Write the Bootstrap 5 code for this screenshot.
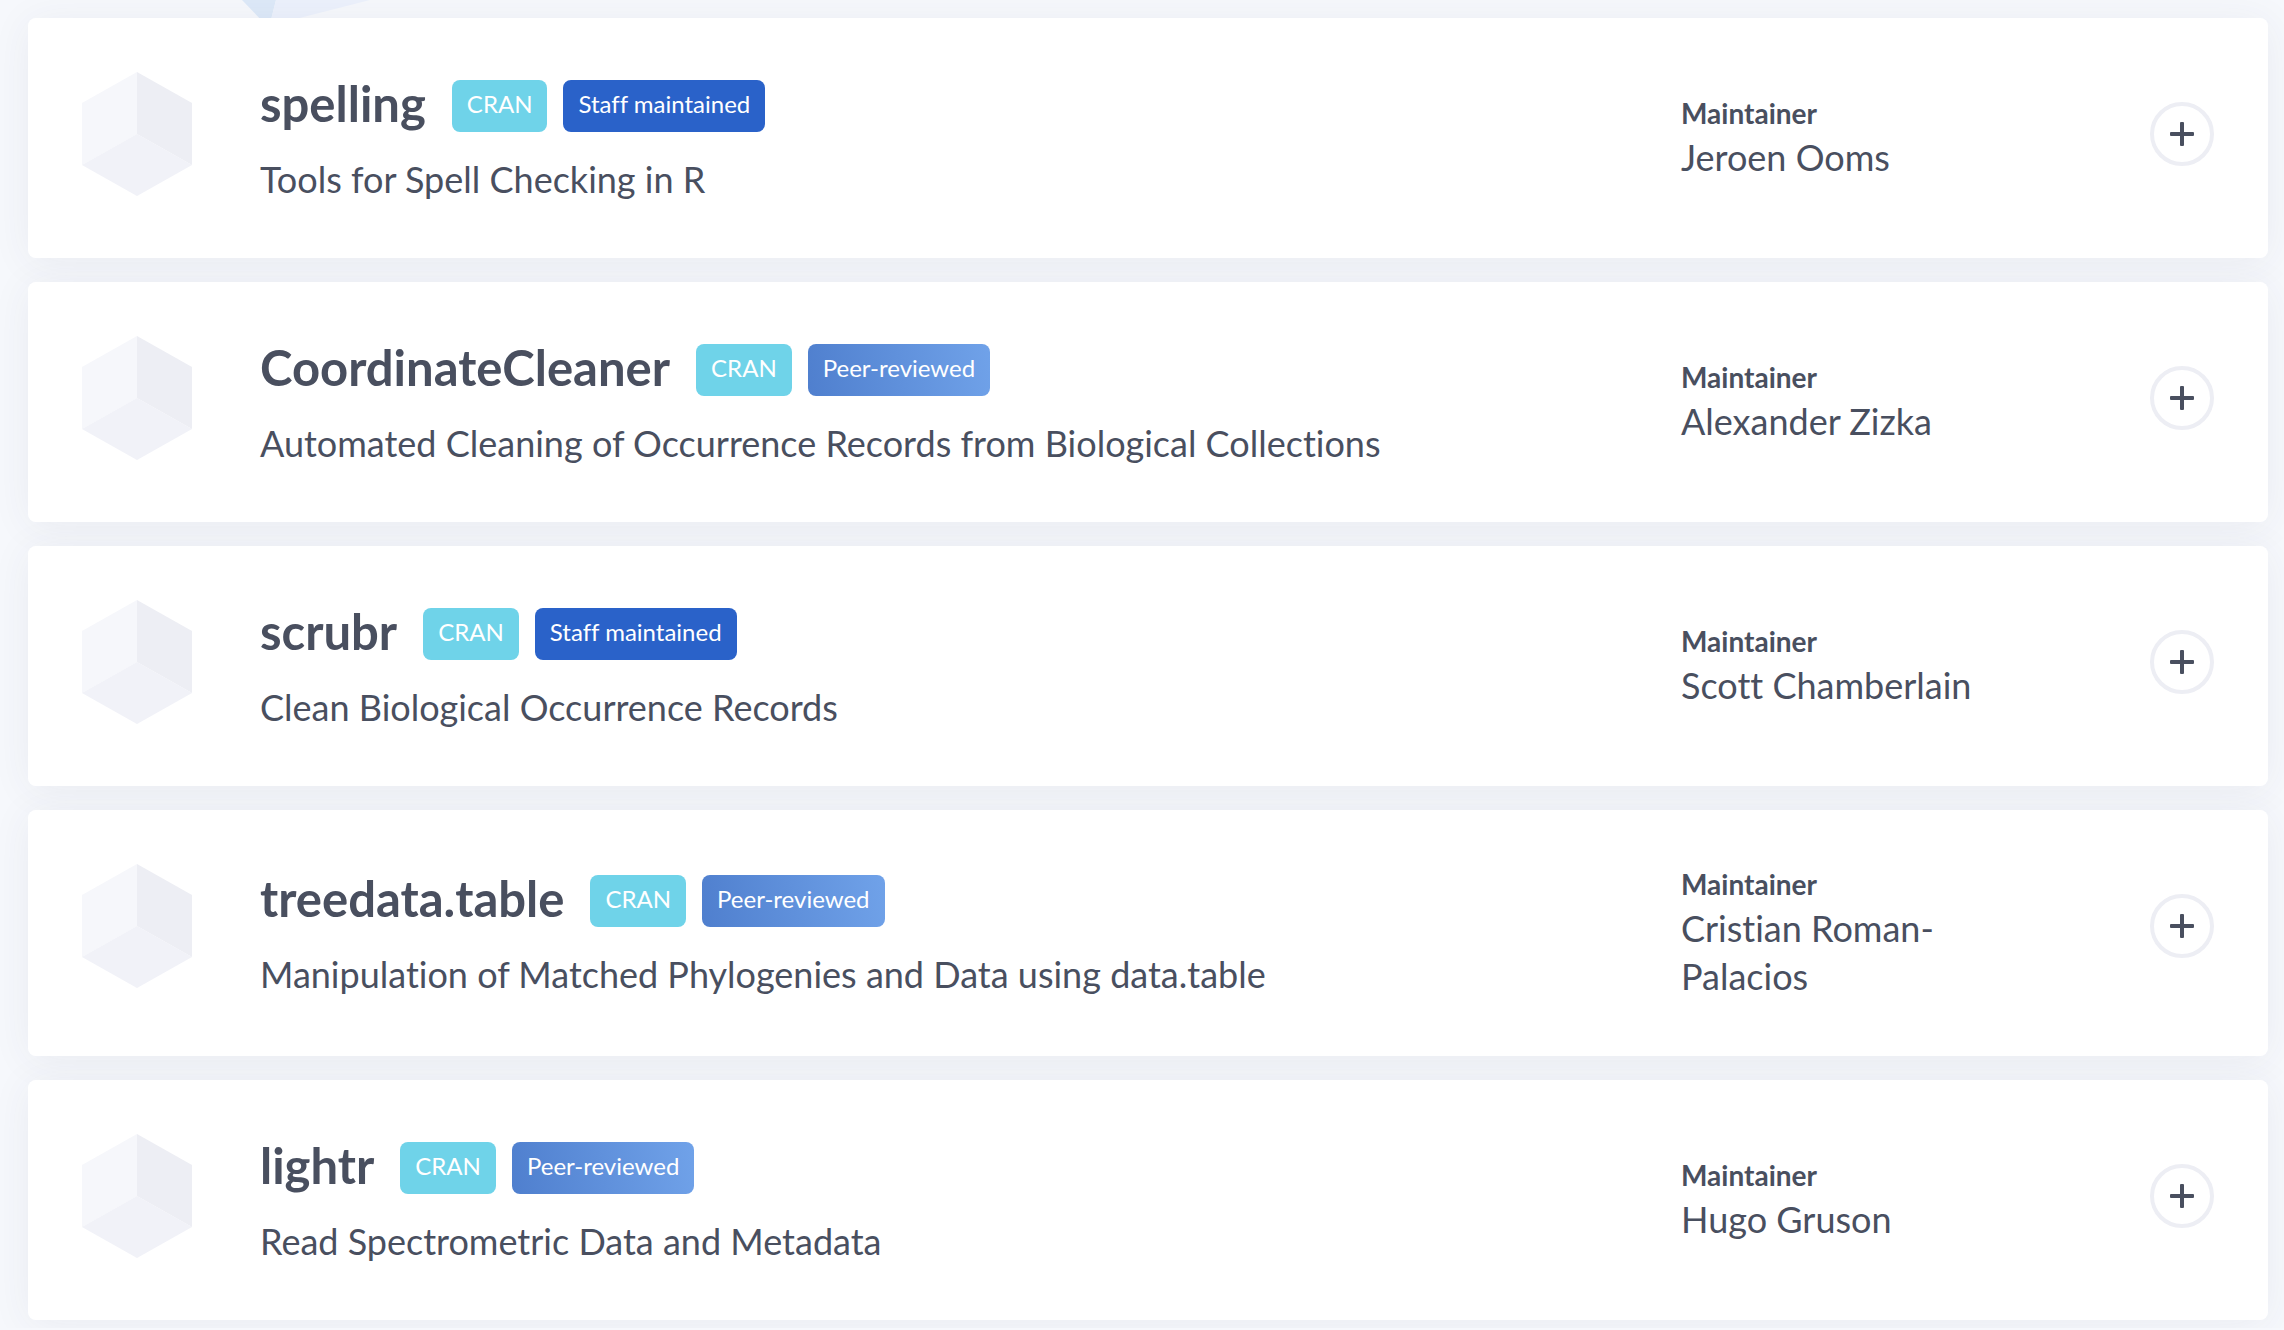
<!DOCTYPE html>
<html lang="en">
<head>
<meta charset="utf-8">
<meta name="viewport" content="width=device-width, initial-scale=1">
<title>Packages</title>
<link rel="stylesheet" href="https://cdn.jsdelivr.net/npm/bootstrap@5.3.0/dist/css/bootstrap.min.css">
<style>
  body { background: #f6f8fc; color: #494f5f; font-family: Lato, "Open Sans", sans-serif; font-variant-ligatures: no-common-ligatures; }
  .pkg-list { padding: 18px 16px 8px 28px; gap: 24px; }
  .pkg-card { border: 0; border-radius: 8px; background: #fff; color: inherit; }
  /* shadow sits behind every card so neighbours stay white */
  .pkg-card::before { content: ""; position: absolute; inset: 0; z-index: -1; border-radius: 8px; box-shadow: 0 4px 40px rgba(56, 56, 96, .065); }
  .pkg-body { padding: 54px 54px 56px; }
  .pkg-icon { width: 110px; height: 124px; margin-right: 68px; }
  .pkg-text { gap: 22px; min-width: 0; }
  .pkg-head { column-gap: 26px; min-height: 60px; }
  .pkg-name { font-size: 49px; font-weight: 700; line-height: 62px; }
  .pkg-desc { font-size: 36px; line-height: 46px; }
  .pkg-tags { gap: 16px; padding-top: 8px; }
  .pkg-tag { padding: 9px 15px 13px; border-radius: 8px; font-size: 24px; line-height: 30px; color: #fff; }
  .tag-cran { background: #6fd3e9; }
  .tag-staff { background: #2a62c9; }
  .tag-peer { background: linear-gradient(80deg, #4f7fce, #70a2e9); }
  .pkg-owner { flex: 0 0 341px; margin-right: 128px; }
  .pkg-label { font-size: 28px; line-height: 40px; font-weight: 700; }
  .pkg-person { font-size: 36px; line-height: 48px; }
  .pkg-toggle { width: 64px; height: 64px; margin-top: 30px; border: 4px solid #edeef4; background: #fff; color: #494f5f; }
  .pkg-decor { top: 0; left: 240px; z-index: -1; }
  @media (max-width: 1399px) {
    .pkg-body { flex-wrap: wrap; row-gap: 24px; }
    .pkg-text { flex-basis: 60%; }
  }
</style>
<script src="https://cdn.jsdelivr.net/npm/bootstrap@5.3.0/dist/js/bootstrap.bundle.min.js"></script>
</head>
<body>
<svg class="pkg-decor position-absolute" width="132" height="24" viewBox="0 0 132 24" aria-hidden="true">
  <path fill="#dde9f8" d="M2 0h34l-6 24h-5z"/>
  <path fill="#ecf1fc" d="M36 0h94L36 24h-6z"/>
</svg>
<svg class="d-none" aria-hidden="true">
  <symbol id="cube" viewBox="0 0 110 124">
    <path fill="#f6f7fb" d="M55 0 0 31v62l55-31z"/>
    <path fill="#edeef4" d="M55 0l55 31v62L55 62z"/>
    <path fill="#f1f2f8" d="M55 62l55 31-55 31L0 93z"/>
  </symbol>
  <symbol id="plus" viewBox="0 0 24 24">
    <path fill="currentColor" d="M11 0h2a1 1 0 0 1 1 1v9h9a1 1 0 0 1 1 1v2a1 1 0 0 1-1 1h-9v9a1 1 0 0 1-1 1h-2a1 1 0 0 1-1-1v-9H1a1 1 0 0 1-1-1v-2a1 1 0 0 1 1-1h9V1a1 1 0 0 1 1-1z"/>
  </symbol>
</svg>
<main class="pkg-list d-flex flex-column">
  <article class="card pkg-card">
    <div class="pkg-body d-flex align-items-center">
      <svg class="pkg-icon flex-shrink-0 align-self-start" aria-hidden="true"><use href="#cube"/></svg>
      <div class="pkg-text d-flex flex-column flex-grow-1">
        <div class="pkg-head d-flex flex-wrap align-items-start">
          <h2 class="pkg-name m-0">spelling</h2>
          <div class="pkg-tags d-flex"><span class="pkg-tag tag-cran">CRAN</span><span class="pkg-tag tag-staff">Staff maintained</span></div>
        </div>
        <p class="pkg-desc m-0">Tools for Spell Checking in R</p>
      </div>
      <div class="pkg-owner"><div class="pkg-label">Maintainer</div><div class="pkg-person">Jeroen Ooms</div></div>
      <button type="button" class="pkg-toggle rounded-circle p-0 d-flex align-items-center justify-content-center flex-shrink-0 align-self-start" aria-label="Show details of spelling"><svg width="24" height="24"><use href="#plus"/></svg></button>
    </div>
  </article>
  <article class="card pkg-card">
    <div class="pkg-body d-flex align-items-center">
      <svg class="pkg-icon flex-shrink-0 align-self-start" aria-hidden="true"><use href="#cube"/></svg>
      <div class="pkg-text d-flex flex-column flex-grow-1">
        <div class="pkg-head d-flex flex-wrap align-items-start">
          <h2 class="pkg-name m-0">CoordinateCleaner</h2>
          <div class="pkg-tags d-flex"><span class="pkg-tag tag-cran">CRAN</span><span class="pkg-tag tag-peer">Peer-reviewed</span></div>
        </div>
        <p class="pkg-desc m-0">Automated Cleaning of Occurrence Records from Biological Collections</p>
      </div>
      <div class="pkg-owner"><div class="pkg-label">Maintainer</div><div class="pkg-person">Alexander Zizka</div></div>
      <button type="button" class="pkg-toggle rounded-circle p-0 d-flex align-items-center justify-content-center flex-shrink-0 align-self-start" aria-label="Show details of CoordinateCleaner"><svg width="24" height="24"><use href="#plus"/></svg></button>
    </div>
  </article>
  <article class="card pkg-card">
    <div class="pkg-body d-flex align-items-center">
      <svg class="pkg-icon flex-shrink-0 align-self-start" aria-hidden="true"><use href="#cube"/></svg>
      <div class="pkg-text d-flex flex-column flex-grow-1">
        <div class="pkg-head d-flex flex-wrap align-items-start">
          <h2 class="pkg-name m-0">scrubr</h2>
          <div class="pkg-tags d-flex"><span class="pkg-tag tag-cran">CRAN</span><span class="pkg-tag tag-staff">Staff maintained</span></div>
        </div>
        <p class="pkg-desc m-0">Clean Biological Occurrence Records</p>
      </div>
      <div class="pkg-owner"><div class="pkg-label">Maintainer</div><div class="pkg-person">Scott Chamberlain</div></div>
      <button type="button" class="pkg-toggle rounded-circle p-0 d-flex align-items-center justify-content-center flex-shrink-0 align-self-start" aria-label="Show details of scrubr"><svg width="24" height="24"><use href="#plus"/></svg></button>
    </div>
  </article>
  <article class="card pkg-card">
    <div class="pkg-body d-flex align-items-center">
      <svg class="pkg-icon flex-shrink-0 align-self-start" aria-hidden="true"><use href="#cube"/></svg>
      <div class="pkg-text d-flex flex-column flex-grow-1">
        <div class="pkg-head d-flex flex-wrap align-items-start">
          <h2 class="pkg-name m-0">treedata.table</h2>
          <div class="pkg-tags d-flex"><span class="pkg-tag tag-cran">CRAN</span><span class="pkg-tag tag-peer">Peer-reviewed</span></div>
        </div>
        <p class="pkg-desc m-0">Manipulation of Matched Phylogenies and Data using data.table</p>
      </div>
      <div class="pkg-owner"><div class="pkg-label">Maintainer</div><div class="pkg-person">Cristian Roman-Palacios</div></div>
      <button type="button" class="pkg-toggle rounded-circle p-0 d-flex align-items-center justify-content-center flex-shrink-0 align-self-start" aria-label="Show details of treedata.table"><svg width="24" height="24"><use href="#plus"/></svg></button>
    </div>
  </article>
  <article class="card pkg-card">
    <div class="pkg-body d-flex align-items-center">
      <svg class="pkg-icon flex-shrink-0 align-self-start" aria-hidden="true"><use href="#cube"/></svg>
      <div class="pkg-text d-flex flex-column flex-grow-1">
        <div class="pkg-head d-flex flex-wrap align-items-start">
          <h2 class="pkg-name m-0">lightr</h2>
          <div class="pkg-tags d-flex"><span class="pkg-tag tag-cran">CRAN</span><span class="pkg-tag tag-peer">Peer-reviewed</span></div>
        </div>
        <p class="pkg-desc m-0">Read Spectrometric Data and Metadata</p>
      </div>
      <div class="pkg-owner"><div class="pkg-label">Maintainer</div><div class="pkg-person">Hugo Gruson</div></div>
      <button type="button" class="pkg-toggle rounded-circle p-0 d-flex align-items-center justify-content-center flex-shrink-0 align-self-start" aria-label="Show details of lightr"><svg width="24" height="24"><use href="#plus"/></svg></button>
    </div>
  </article>
</main>
</body>
</html>
